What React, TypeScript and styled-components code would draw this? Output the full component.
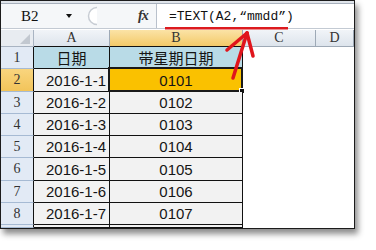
import React from "react";
import styled, { createGlobalStyle } from "styled-components";

const GlobalStyle = createGlobalStyle`
  body {
    margin: 0;
    background: #ffffff;
    font-family: "Liberation Sans", Arial, sans-serif;
  }
`;

const Page = styled.div`
  width: 376px;
  height: 250px;
  background: #ffffff;
  overflow: hidden;
`;

const Window = styled.div`
  position: relative;
  width: 353px;
  height: 227px;
  border: 1px solid #1c1c1c;
  box-shadow: 3px 5px 6px rgba(0, 0, 0, 0.45);
  background: #ffffff;
  display: flex;
  flex-direction: column;
  overflow: hidden;
`;

const RibbonEdge = styled.div`
  height: 2px;
  background: #dfe4ea;
  border-bottom: 1px solid #a7b0bc;
`;

const FormulaBar = styled.div`
  height: 24px;
  display: flex;
  align-items: stretch;
  background: #f5f7f9;
  border-bottom: 1px solid #c3cad3;
  margin-bottom: 1px;
`;

const NameBox = styled.div`
  width: 75px;
  flex-shrink: 0;
  display: flex;
  align-items: center;
  padding-left: 20px;
  box-sizing: border-box;
  font-family: "Liberation Serif", serif;
  font-size: 15px;
  color: #111;
`;

const DropArrow = styled.span`
  margin-left: auto;
  margin-right: 4px;
  width: 0;
  height: 0;
  border-left: 3px solid transparent;
  border-right: 3px solid transparent;
  border-top: 4px solid #111;
`;

const Splitter = styled.div`
  flex: 1;
  display: flex;
  align-items: center;
`;

const FxLabel = styled.div`
  width: 18px;
  flex-shrink: 0;
  display: flex;
  align-items: center;
  font-family: "Liberation Serif", serif;
  font-style: italic;
  font-weight: bold;
  font-size: 14px;
  color: #333;
  letter-spacing: -1px;
`;

const FormulaInput = styled.div`
  width: 198px;
  flex-shrink: 0;
  box-sizing: border-box;
  background: #ffffff;
  border-left: 1px solid #b9c1cc;
  display: flex;
  align-items: center;
  padding-left: 12px;
  font-family: "Liberation Mono", monospace;
  font-size: 13px;
  color: #111;
  white-space: pre;
`;

const Sheet = styled.div`
  flex: 1;
  display: grid;
  grid-template-columns: 33px 76px 133px 73px 1fr;
  grid-template-rows: 17px repeat(8, auto) 1fr;
`;

const Corner = styled.div`
  box-sizing: border-box;
  background: #e8ecf1;
  border-right: 1px solid #a9b4c2;
  border-bottom: 1px solid #a9b4c2;
  position: relative;

  &::after {
    content: "";
    position: absolute;
    right: 3px;
    bottom: 2px;
    border-left: 10px solid transparent;
    border-bottom: 10px solid #c2c8d0;
  }
`;

const ColHead = styled.div<{ $active?: boolean; $dark?: boolean }>`
  box-sizing: border-box;
  display: flex;
  align-items: center;
  justify-content: center;
  font-family: "Liberation Serif", serif;
  font-size: 14px;
  color: #333;
  background: ${(p) =>
    p.$active
      ? "linear-gradient(#fbe3a6, #f3c968)"
      : "linear-gradient(#f1f4f8, #dde4ec)"};
  border-right: 1px solid #9ea9b6;
  border-bottom: 1px solid ${(p) => (p.$dark ? "#111" : "#9ea9b6")};
  overflow: hidden;
`;

const RowHead = styled.div<{ $active?: boolean; $h: number }>`
  box-sizing: border-box;
  height: ${(p) => p.$h}px;
  display: flex;
  align-items: center;
  justify-content: center;
  font-family: "Liberation Serif", serif;
  font-size: 14px;
  color: #333;
  background: ${(p) =>
    p.$active ? "linear-gradient(#f9d57e, #f2c45a)" : "#e2eaf5"};
  border-right: 1px solid #111;
  border-bottom: 1px solid #a6bad3;
`;

const Cell = styled.div<{ $fill?: string; $align?: string; $cjk?: boolean }>`
  box-sizing: border-box;
  position: relative;
  display: flex;
  align-items: center;
  justify-content: ${(p) => p.$align || "center"};
  padding-right: ${(p) => (p.$align === "flex-end" ? "3px" : "0")};
  background: ${(p) => p.$fill || "#f2f2f2"};
  border-right: 1px solid #111;
  border-bottom: 1px solid #111;
  font-family: ${(p) =>
    p.$cjk
      ? '"Noto Sans CJK SC", sans-serif'
      : '"Liberation Sans", Arial, sans-serif'};
  font-size: 15px;
  color: #151515;
`;

const ActiveCell = styled(Cell)`
  &::before {
    content: "";
    position: absolute;
    inset: -2px -1px -1px -2px;
    border: 2px solid #1a1a1a;
    pointer-events: none;
  }
  &::after {
    content: "";
    position: absolute;
    right: -3px;
    bottom: -3px;
    width: 4px;
    height: 4px;
    background: #111;
    border: 1px solid #fff;
  }
`;

const Blank = styled.div`
  background: #ffffff;
`;

const Annotation = styled.svg`
  position: absolute;
  left: 0;
  top: 0;
  pointer-events: none;
`;

const Knob = () => (
  <svg width="20" height="22" viewBox="0 0 20 22" style={{ marginLeft: 4 }}>
    <path
      d="M17 2.5 A 8.5 8.5 0 1 0 17 19.5"
      fill="#ffffff"
      stroke="#c8cdd4"
      strokeWidth="1.5"
    />
  </svg>
);

const rowHeights = [22, 23, 22, 22, 22, 23, 22, 22];
const dates = [
  "2016-1-1",
  "2016-1-2",
  "2016-1-3",
  "2016-1-4",
  "2016-1-5",
  "2016-1-6",
  "2016-1-7",
];

export default function App() {
  return (
    <Page>
      <GlobalStyle />
      <Window>
        <RibbonEdge />
        <FormulaBar>
          <NameBox>
            B2
            <DropArrow />
          </NameBox>
          <Splitter>
            <Knob />
          </Splitter>
          <FxLabel>fx</FxLabel>
          <FormulaInput>=TEXT(A2,“mmdd”)</FormulaInput>
        </FormulaBar>
        <Sheet>
          <Corner />
          <ColHead $dark>A</ColHead>
          <ColHead $active $dark>B</ColHead>
          <ColHead>C</ColHead>
          <ColHead>D</ColHead>

          <RowHead $h={rowHeights[0]}>1</RowHead>
          <Cell $fill="#b9dbe7" $cjk>日期</Cell>
          <Cell $fill="#b9dbe7" $cjk>带星期日期</Cell>
          <Blank />
          <Blank />

          {dates.map((d, i) => {
            const code = "010" + (i + 1);
            return (
              <React.Fragment key={d}>
                <RowHead $h={rowHeights[i + 1]} $active={i === 0}>
                  {i + 2}
                </RowHead>
                <Cell $align="flex-end">{d}</Cell>
                {i === 0 ? (
                  <ActiveCell $fill="#fac100">{code}</ActiveCell>
                ) : (
                  <Cell>{code}</Cell>
                )}
                <Blank />
                <Blank />
              </React.Fragment>
            );
          })}

          <RowHead $h={3} />
          <Cell />
          <Cell />
          <Blank />
          <Blank />
        </Sheet>

        <Annotation width="353" height="227" viewBox="1 1 353 227">
          <rect x="165" y="27" width="123" height="2.5" fill="#dc1a1e" />
          <g
            stroke="#e0151c"
            strokeWidth="3.5"
            strokeLinecap="round"
            fill="none"
          >
            <line x1="233" y1="78" x2="247" y2="33" />
            <line x1="247" y1="33" x2="227" y2="50" />
            <line x1="247" y1="33" x2="253" y2="56" />
          </g>
        </Annotation>
      </Window>
    </Page>
  );
}
